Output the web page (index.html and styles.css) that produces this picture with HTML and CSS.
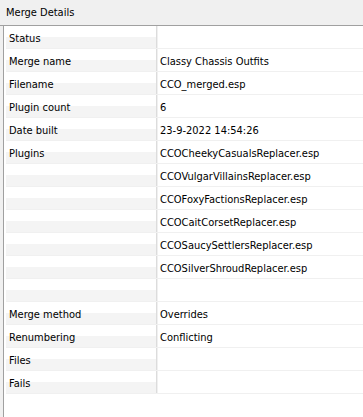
FILE: index.html
```html
<!DOCTYPE html>
<html lang="en">
<head>
    <meta charset="UTF-8">
    <title>Merge Details</title>
    <link rel="stylesheet" href="styles.css">
</head>
<body>
    <div class="header">Merge Details</div>

    <div class="panel">
        <div class="details">
            <div class="row"><div class="key">Status</div><div class="val"></div></div>
            <div class="row"><div class="key">Merge name</div><div class="val">Classy Chassis Outfits</div></div>
            <div class="row"><div class="key">Filename</div><div class="val">CCO_merged.esp</div></div>
            <div class="row"><div class="key">Plugin count</div><div class="val">6</div></div>
            <div class="row"><div class="key">Date built</div><div class="val">23-9-2022 14:54:26</div></div>
            <div class="row"><div class="key">Plugins</div><div class="val">CCOCheekyCasualsReplacer.esp</div></div>
            <div class="row"><div class="key"></div><div class="val">CCOVulgarVillainsReplacer.esp</div></div>
            <div class="row"><div class="key"></div><div class="val">CCOFoxyFactionsReplacer.esp</div></div>
            <div class="row"><div class="key"></div><div class="val">CCOCaitCorsetReplacer.esp</div></div>
            <div class="row"><div class="key"></div><div class="val">CCOSaucySettlersReplacer.esp</div></div>
            <div class="row"><div class="key"></div><div class="val">CCOSilverShroudReplacer.esp</div></div>
            <div class="row"><div class="key"></div><div class="val"></div></div>
            <div class="row"><div class="key">Merge method</div><div class="val">Overrides</div></div>
            <div class="row"><div class="key">Renumbering</div><div class="val">Conflicting</div></div>
            <div class="row"><div class="key">Files</div><div class="val"></div></div>
            <div class="row"><div class="key">Fails</div><div class="val"></div></div>
        </div>
    </div>
</body>
</html>
```

FILE: styles.css
```css
* {
    margin: 0;
    padding: 0;
    box-sizing: border-box;
}

html, body {
    height: 100%;
}

body {
    font-family: 'DejaVu Sans', 'Liberation Sans', sans-serif;
    font-stretch: condensed;
    font-size: 11px;
    color: #000000;
    background: #f0f0f0;
    display: flex;
    flex-direction: column;
    overflow: hidden;
}

.header {
    height: 26px;
    line-height: 26px;
    padding-left: 6px;
    border-bottom: 1px solid #a0a0a0;
}

.panel {
    flex: 1;
    margin-left: 3px;
    background: #ffffff;
    border-left: 1px solid #a0a0a0;
    padding: 0 0 0 2px;
}

.details {
    display: flex;
    flex-direction: column;
}

.row {
    display: flex;
    height: 23px;
    border-bottom: 1px solid #f0f0f0;
}

/* label column: two-tone header look */
.key {
    width: 151px;
    padding: 1px 0 0 3px;
    line-height: 23px;
    background: linear-gradient(#ffffff 50%, #f4f4f4 50%);
    border-right: 1px solid #dcdcdc;
}

.val {
    flex: 1;
    padding: 1px 0 0 2px;
    line-height: 23px;
    border-left: 1px solid #f0f0f0;
}
```
